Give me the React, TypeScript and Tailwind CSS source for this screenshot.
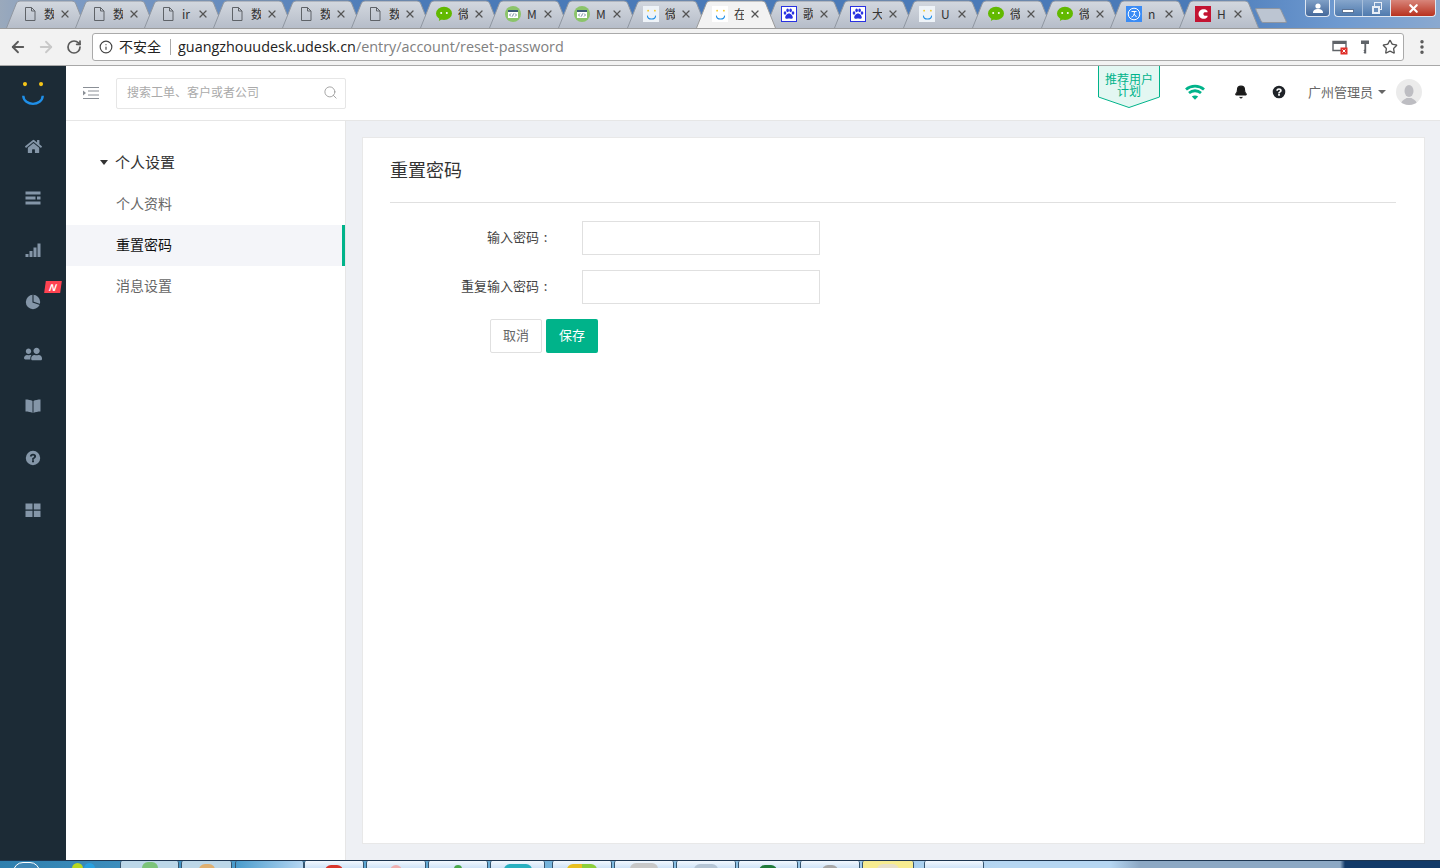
import React from "react";
import {
  ArrowLeft,
  ArrowRight,
  RotateCw,
  Info,
  Star,
  EllipsisVertical,
  Search,
  X,
  Bell,
} from "lucide-react";
import { FaHome, FaUserFriends } from "react-icons/fa";

const cjk = "font-['Noto_Sans_CJK_SC','Liberation_Sans',sans-serif]";

type TabIcon = "doc" | "wechat" | "code" | "udesk" | "paw" | "ji" | "red";

const tabs: { icon: TabIcon; text: string; active?: boolean }[] = [
  { icon: "doc", text: "数" },
  { icon: "doc", text: "数" },
  { icon: "doc", text: "ir" },
  { icon: "doc", text: "数" },
  { icon: "doc", text: "数" },
  { icon: "doc", text: "数" },
  { icon: "wechat", text: "微" },
  { icon: "code", text: "M" },
  { icon: "code", text: "M" },
  { icon: "udesk", text: "微" },
  { icon: "udesk", text: "在", active: true },
  { icon: "paw", text: "歌" },
  { icon: "paw", text: "大" },
  { icon: "udesk", text: "U" },
  { icon: "wechat", text: "微" },
  { icon: "wechat", text: "微" },
  { icon: "ji", text: "n" },
  { icon: "red", text: "H" },
];

function Smile({ size = 16 }: { size?: number }) {
  return (
    <svg width={size} height={size} viewBox="0 0 24 24">
      <circle cx="4.600" cy="3.800" r="1.900" fill="#f5c518" />
      <circle cx="19.400" cy="3.800" r="1.900" fill="#f5c518" />
      <path d="M3 14.500C3.500 24.500 20.500 24.500 21 14.500" fill="none" stroke="#1f8fe8" strokeWidth="2.200" />
    </svg>
  );
}

function Favicon({ icon, active }: { icon: TabIcon; active?: boolean }) {
  if (icon === "doc") {
    return (
      <svg width="16" height="16" viewBox="0 0 16 16" fill="none" stroke="#5f6368" strokeWidth="1">
        <path d="M3.500 1.500h6l3.500 3.500v9.500h-9.500z" />
        <path d="M9.500 1.500v3.500h3.500" />
      </svg>
    );
  }
  if (icon === "wechat") {
    return (
      <svg width="16" height="16" viewBox="0 0 16 16">
        <ellipse cx="8" cy="7.400" rx="8" ry="6.600" fill="#62b900" />
        <path d="M3.500 11.500l-.6 3.600 4-2.600z" fill="#62b900" />
        <circle cx="5.200" cy="7" r="1" fill="#fff" />
        <circle cx="10.800" cy="7" r="1" fill="#fff" />
      </svg>
    );
  }
  if (icon === "code") {
    return (
      <svg width="16" height="16" viewBox="0 0 16 16">
        <circle cx="8" cy="8" r="8" fill="#8bc46a" />
        <rect x="3" y="4" width="10" height="8" fill="#fff" />
        <rect x="3" y="4" width="10" height="2" fill="#3c5a78" />
        <path d="M6 7.500L4.500 9 6 10.500M10 7.500L11.500 9 10 10.500M8.600 7.500L7.400 10.500" fill="none" stroke="#3c5a78" strokeWidth=".7" />
      </svg>
    );
  }
  if (icon === "udesk") {
    return (
      <div className={`flex h-4 w-4 items-center justify-center ${active ? "bg-white" : "bg-[#eef3f8]"}`}>
        <Smile size={11} />
      </div>
    );
  }
  if (icon === "paw") {
    return (
      <svg width="16" height="16" viewBox="0 0 16 16">
        <rect x=".5" y=".5" width="15" height="15" fill="#fff" stroke="#2932e1" />
        <g fill="#2932e1">
          <ellipse cx="4" cy="7" rx="1.300" ry="1.700" />
          <ellipse cx="6.600" cy="4.400" rx="1.300" ry="1.800" />
          <ellipse cx="9.600" cy="4.400" rx="1.300" ry="1.800" />
          <ellipse cx="12" cy="7" rx="1.300" ry="1.700" />
          <path d="M8 7.400c-2 0-3.800 2.400-3.800 4 0 1.600 2 1.400 3.800 1.200 1.800.2 3.800.4 3.800-1.200 0-1.600-1.800-4-3.800-4z" />
        </g>
      </svg>
    );
  }
  if (icon === "ji") {
    return (
      <svg width="16" height="16" viewBox="0 0 16 16">
        <rect width="16" height="16" fill="#3b8cf5" />
        <circle cx="8" cy="8" r="5.800" fill="none" stroke="#fff" strokeWidth="1" />
        <path d="M5.500 5.500h5M8.500 5.500c0 3-1 5-3 5.500M8 8l2.500 3" fill="none" stroke="#fff" strokeWidth="1" />
      </svg>
    );
  }
  return (
    <svg width="16" height="16" viewBox="0 0 16 16">
      <rect width="16" height="16" fill="#c31432" />
      <path d="M12.500 5C11.500 3.600 10 3.200 8.600 3.200 6 3.200 3.500 5 3.500 8s2.500 4.800 5.100 4.800c1.400 0 2.900-.4 3.900-1.800z" fill="#fff" />
      <path d="M13 6.200H9.500A2 2 0 0 0 9.500 9.800H13z" fill="#c31432" />
    </svg>
  );
}

function Tab({ icon, text, active }: { icon: TabIcon; text: string; active?: boolean }) {
  return (
    <div className={`relative -mr-[11px] flex h-[28px] w-[80px] shrink-0 items-center pl-[16px] ${active ? "z-10" : ""}`}>
      <svg className="absolute inset-0" width="80" height="28" viewBox="0 0 80 28">
        <defs>
          <linearGradient id="tabFill" x1="0" y1="0" x2="0" y2="1">
            <stop offset="0" stopColor="#d3d8df" />
            <stop offset="1" stopColor="#b6bdc9" />
          </linearGradient>
        </defs>
        <path
          d="M0.500 28L10.500 3Q11.500 1 14 1H66Q68.500 1 69.500 3L79.500 28"
          fill={active ? "#f2f2f2" : "url(#tabFill)"}
          stroke={active ? "#9a9a9a" : "#8f96a1"}
          strokeWidth="1"
        />
      </svg>
      <div className="relative flex items-center">
        <Favicon icon={icon} active={active} />
        <span className={`${cjk} ml-[6px] h-4 w-[10px] overflow-hidden text-[12px] leading-4 text-[#333]`}>{text}</span>
        <X className="ml-[5px] text-[#555]" size={12} strokeWidth={2.400} />
      </div>
    </div>
  );
}

function BrowserChrome() {
  return (
    <>
      <div className="relative z-0 flex h-[29px] shrink-0 overflow-hidden border-b border-[#9b9b9b] bg-[linear-gradient(90deg,#9aa9bc_0px,#7f9cc4_60px,#4a7ab8_400px,#4a7ab8_1200px,#6f9ad0_1340px,#8aa9d0_1440px)] pl-[6px]">
        {tabs.map((t, i) => (
          <Tab key={i} icon={t.icon} text={t.text} active={t.active} />
        ))}
        <div className="ml-[10px] mt-[8px] h-[15px] w-[26px] skew-x-[25deg] rounded-[2px] border border-[#8f96a1] bg-[#bcc5d2]" />
        <div className="ml-auto flex h-[18px] items-start pr-[4px]">
          <div className="mr-[4px] flex h-[17px] w-[25px] items-center justify-center rounded-b-[4px] border border-t-0 border-[#dfe7f2] bg-[linear-gradient(180deg,#7f9fc6,#44689a)]">
            <svg width="12" height="10" viewBox="0 0 12 10" fill="#fff">
              <circle cx="6" cy="3" r="2.600" />
              <path d="M1 10c0-3 2-4 5-4s5 1 5 4z" />
            </svg>
          </div>
          <div className="flex h-[17px] w-[56px] rounded-bl-[4px] border border-t-0 border-r-0 border-[#dfe7f2] bg-[linear-gradient(180deg,#86a6cc,#4f7aae)]">
            <div className="flex w-[28px] items-center justify-center border-r border-[#a7bfdb]">
              <div className="mt-[5px] h-[4px] w-[12px] border border-[#5c7394] bg-white" />
            </div>
            <div className="relative flex w-[28px] items-center justify-center">
              <div className="absolute left-[11px] top-[2px] h-[8px] w-[8px] border border-[#e8eef6]" />
              <div className="relative mt-[3px] h-[8px] w-[8px] border-2 border-[#e8eef6] bg-[#6a8fbc]" />
            </div>
          </div>
          <div className="flex h-[17px] w-[46px] items-center justify-center rounded-br-[4px] border border-t-0 border-[#dfe7f2] bg-[linear-gradient(180deg,#d8857a,#b8321f)]">
            <X className="text-white" size={13} strokeWidth={4} />
          </div>
        </div>
      </div>

      <div className="flex h-[37px] shrink-0 items-center border-b border-[#a8a8a8] bg-[#f2f2f2]">
        <ArrowLeft className="ml-[9px] text-[#5a5a5a]" size={18} strokeWidth={2.400} />
        <ArrowRight className="ml-[10px] text-[#c8c8c8]" size={18} strokeWidth={2.400} />
        <RotateCw className="ml-[11px] text-[#5a5a5a]" size={16} strokeWidth={2.600} />
        <div className="ml-[10px] flex h-[28px] w-[1312px] items-center rounded-[3px] border border-[#aaaaaa] bg-white pl-[6px]">
          <Info className="text-[#444]" size={14} strokeWidth={2} />
          <span className={`${cjk} ml-[6px] pb-[2px] text-[14px] text-[#222]`}>不安全</span>
          <div className="ml-[9px] h-[16px] w-px bg-[#aaa]" />
          <span className="ml-[7px] font-['Open_Sans',sans-serif] text-[14.400px] text-[#222]">
            guangzhouudesk.udesk.cn
            <span className="text-[#808080]">/entry/account/reset-password</span>
          </span>
          <div className="ml-auto flex items-center gap-[9px] pr-[5px]">
            <svg width="16" height="16" viewBox="0 0 16 16">
              <path d="M1 2.500h13v9H1z" fill="none" stroke="#5f6368" strokeWidth="1.400" />
              <rect x="1" y="2" width="13" height="3" fill="#5f6368" />
              <rect x="8.500" y="8.500" width="7" height="7" fill="#e0302a" />
              <path d="M10.500 10.500l3 3m0-3l-3 3" stroke="#fff" />
            </svg>
            <svg width="16" height="16" viewBox="0 0 16 16" fill="#5f6368">
              <path d="M4 1.500h8v3.500H9.200v9.500H7.400l-.9-1 .9-1-.9-1 .9-1V5H4z" />
            </svg>
            <Star className="text-[#555]" size={16} strokeWidth={2} />
          </div>
        </div>
        <EllipsisVertical className="ml-[9px] text-[#555]" size={18} strokeWidth={2.600} />
      </div>
    </>
  );
}

const navIcons: React.ReactNode[] = [
  <FaHome key="home" size={17} />,
  <svg key="list" width="16" height="16" viewBox="0 0 16 16">
    <path d="M.5 1.500h15v3H.5zM.5 6.500h10v3H.5zM12 6.500h3.500v3H12zM.5 11.500h15v3H.5z" />
  </svg>,
  <svg key="bars" width="16" height="16" viewBox="0 0 16 16">
    <path d="M.5 12h3v3h-3zM4.500 9h3v6h-3zM8.500 5.500h3V15h-3zM12.500 1.500h3V15h-3z" />
  </svg>,
  <svg key="pie" width="16" height="16" viewBox="0 0 16 16">
    <circle cx="8" cy="8" r="7.200" />
    <path d="M8 .5V8l7 2.500" fill="none" stroke="#1c2b36" strokeWidth="1.100" />
  </svg>,
  <FaUserFriends key="users" size={18} className="-scale-x-100" />,
  <svg key="book" width="16" height="16" viewBox="0 0 16 16">
    <path d="M.5 1.500C3 1.500 6 2 7.500 3v12C6 14 3 13.500.5 13.500zM15.500 1.500C13 1.500 10 2 8.500 3v12c1.500-1 4.500-1.500 7-1.500z" />
  </svg>,
  <svg key="help" width="16" height="16" viewBox="0 0 16 16">
    <path
      fillRule="evenodd"
      d="M8 .8a7.200 7.200 0 1 1 0 14.400A7.200 7.200 0 0 1 8 .8zM7 10.300v1.900h2v-1.900zM8 3.800c-1.700 0-3 .9-3.100 2.700h1.900c.1-.7.5-1 1.200-1 .6 0 1.100.3 1.100.9 0 .5-.3.800-.9 1.200-.9.500-1.200 1.100-1.200 2.100h1.900c0-.5.200-.8.800-1.200.8-.5 1.400-1.100 1.400-2.200 0-1.600-1.300-2.500-3.100-2.500z"
    />
  </svg>,
  <svg key="grid" width="16" height="16" viewBox="0 0 16 16">
    <path d="M.5 1.500h7v6h-7zM8.800 1.500h6.700v6H8.800zM.5 8.800h7V15h-7zM8.800 8.800h6.700V15H8.800z" />
  </svg>,
];

function MainSidebar() {
  return (
    <aside className="flex w-[66px] shrink-0 flex-col items-center bg-[#1c2b36]">
      <div className="flex h-[54px] w-full items-center justify-center">
        <Smile size={26} />
      </div>
      {navIcons.map((icon, i) => (
        <div key={i} className="relative flex h-[52px] w-full items-center justify-center fill-[#8496a8] text-[#8496a8]">
          {icon}
          {i === 3 && (
            <span className="absolute right-[5px] top-[5px] flex h-[12px] w-[16px] skew-x-[-8deg] items-center justify-center bg-[#ff4351] font-['Liberation_Sans',sans-serif] text-[10px] font-bold italic text-white">
              N
            </span>
          )}
        </div>
      ))}
    </aside>
  );
}

function TopBar() {
  return (
    <header className="flex h-[55px] shrink-0 items-center border-b border-[#e6e6e6] bg-white pl-[16px] pr-[18px]">
      <svg width="18" height="14" viewBox="0 0 18 14" stroke="#8a8f96" strokeWidth="1">
        <path d="M1 1.500h16M6 5h11M6 9h11M1 12.500h16" />
        <path d="M1 4.500v5l3-2.500z" fill="#8a8f96" stroke="none" />
      </svg>
      <div className="ml-[16px] flex h-[31px] w-[230px] items-center justify-between rounded-[2px] border border-[#e6e6e6] pb-[2px] pl-[10px] pr-[7px]">
        <span className={`${cjk} text-[12px] text-[#aaaaaa]`}>搜索工单、客户或者公司</span>
        <Search className="text-[#999]" size={15} strokeWidth={1.400} />
      </div>
      <div className="ml-auto flex h-full items-start">
        <div className="relative mr-[25px] flex h-[42px] w-[62px] justify-center">
          <svg className="absolute inset-0" width="62" height="42" viewBox="0 0 62 42">
            <path d="M.5 0V31L31 41.500 61.500 31V0" fill="#e3f7f2" stroke="#00b38a" />
          </svg>
          <span className={`${cjk} relative mt-[7px] w-[50px] text-center text-[12px] leading-[12px] text-[#00b38a]`}>
            推荐用户计划
          </span>
        </div>
        <div className="flex h-full items-center pb-[2px]">
          <svg width="20" height="16" viewBox="0 0 20 16" fill="none" stroke="#00b38a" strokeWidth="2.800">
            <path d="M1 5.500c5-4.500 13-4.500 18 0M4 9c3.500-3 8.500-3 12 0" />
            <path d="M6.800 12.500L10 15.800l3.200-3.300c-1.800-1.400-4.600-1.400-6.400 0z" fill="#00b38a" stroke="none" />
          </svg>
          <Bell className="ml-[29px] text-[#1a1a1a]" size={14} fill="#1a1a1a" />
          <svg className="ml-[24px] fill-[#1f2328]" width="14" height="14" viewBox="0 0 16 16">
            <path
              fillRule="evenodd"
              d="M8 .8a7.200 7.200 0 1 1 0 14.400A7.200 7.200 0 0 1 8 .8zM7 10.300v1.900h2v-1.900zM8 3.800c-1.700 0-3 .9-3.100 2.700h1.900c.1-.7.500-1 1.200-1 .6 0 1.100.3 1.100.9 0 .5-.3.800-.9 1.200-.9.500-1.200 1.100-1.200 2.100h1.900c0-.5.200-.8.800-1.200.8-.5 1.400-1.100 1.400-2.200 0-1.600-1.300-2.500-3.100-2.500z"
            />
          </svg>
          <span className={`${cjk} ml-[22px] text-[13px] text-[#666]`}>广州管理员</span>
          <div className="ml-[5px] h-0 w-0 border-x-[4px] border-t-[4px] border-x-transparent border-t-[#666]" />
          <div className="ml-[10px] flex h-[26px] w-[26px] items-end justify-center overflow-hidden rounded-full bg-[#ebebeb]">
            <svg width="16" height="21" viewBox="0 0 16 21" fill="#bdbdc2">
              <ellipse cx="8" cy="7" rx="4.500" ry="6" />
              <path d="M0 21c0-5 4-5.500 5.500-7h5c1.500 1.500 5.500 2 5.500 7z" />
            </svg>
          </div>
        </div>
      </div>
    </header>
  );
}

function SubMenu() {
  return (
    <nav className={`${cjk} w-[280px] shrink-0 border-r border-[#e6e6e6] bg-white pt-[21px]`}>
      <div className="flex h-[42px] items-center pb-[1px] pl-[34px] text-[15px] text-[#333]">
        <div className="mr-[7px] h-0 w-0 border-x-[4px] border-t-[5px] border-x-transparent border-t-[#333]" />
        个人设置
      </div>
      <div className="flex h-[41px] items-center pb-[2px] pl-[50px] text-[14px] text-[#666]">个人资料</div>
      <div className="flex h-[41px] items-center border-r-[3px] border-[#00b38a] bg-[#f4f5f9] pb-[2px] pl-[50px] text-[14px] text-[#111]">
        重置密码
      </div>
      <div className="flex h-[41px] items-center pb-[2px] pl-[50px] text-[14px] text-[#666]">消息设置</div>
    </nav>
  );
}

function FormRow({ label }: { label: string }) {
  return (
    <div className="flex items-center">
      <label className="flex w-[162px] justify-end pb-[3px] text-[13px] text-[#444]">
        {label}
        <span className="w-[13px] text-center">:</span>
      </label>
      <input type="password" className="ml-[30px] h-[34px] w-[238px] border border-[#e0e0e0] bg-white outline-none" />
    </div>
  );
}

function ResetPassword() {
  return (
    <section className={`${cjk} flex-1 border border-[#e8e8e8] bg-white pl-[27px] pr-[28px]`}>
      <h1 className="flex h-[65px] items-center border-b border-[#e0e0e0] pb-[2px] text-[18px] font-normal text-[#333]">
        重置密码
      </h1>
      <form className="flex flex-col gap-[15px] pt-[18px]">
        <FormRow label="输入密码" />
        <FormRow label="重复输入密码" />
        <div className="ml-[100px] flex gap-[4px]">
          <button type="button" className="h-[34px] w-[52px] rounded-[2px] border border-[#e0e0e0] bg-white pb-[2px] text-[13px] text-[#666]">
            取消
          </button>
          <button type="button" className="h-[34px] w-[52px] rounded-[2px] bg-[#00b38a] pb-[2px] text-[13px] text-white">
            保存
          </button>
        </div>
      </form>
    </section>
  );
}

function Taskbar() {
  const light = "bg-[linear-gradient(180deg,#f2f8fe,#cfe3f7)]";
  const items = [
    { w: "w-[59px] ml-[25px]", tip: "bg-[#7cc47a] mt-[1px] w-[16px]", bg: "bg-[#bcd7e8]" },
    { w: "w-[51px] ml-[2px]", tip: "bg-[#e0b070] mt-[3px] w-[16px]", bg: "bg-[#bcd7e8]" },
    { w: "w-[69px] ml-[3px]", tip: "bg-transparent mt-[3px] w-[16px]", bg: "bg-[linear-gradient(90deg,#4a9ccc,#b5d6f2)]" },
    { w: "w-[60px]", tip: "bg-[#d8352a] mt-[4px] w-[18px]", bg: light },
    { w: "w-[60px] ml-[2px]", tip: "bg-[#f0b0b0] mt-[4px] w-[12px]", bg: light },
    { w: "w-[60px] ml-[2px]", tip: "bg-[#49a84c] mt-[4px] w-[8px]", bg: light },
    { w: "w-[55px] ml-[2px]", tip: "bg-[#28b0c0] mt-[3px] w-[28px]", bg: light },
    { w: "w-[60px] ml-[7px]", tip: "bg-[linear-gradient(90deg,#e8c020_50%,#8ccf3c_50%)] mt-[3px] w-[30px]", bg: light },
    { w: "w-[60px] ml-[2px]", tip: "bg-[#c8c8c8] mt-[2px] w-[28px]", bg: light },
    { w: "w-[60px] ml-[2px]", tip: "bg-[#b5c5d5] mt-[3px] w-[24px]", bg: light },
    { w: "w-[60px] ml-[2px]", tip: "bg-[#1f7a3a] mt-[4px] w-[18px]", bg: light },
    { w: "w-[60px] ml-[2px]", tip: "bg-[#a8a8a8] mt-[4px] w-[16px]", bg: light },
    { w: "w-[52px] ml-[2px]", tip: "bg-[#e8e0c8] mt-[3px] w-[22px]", bg: "bg-[#f7ec90]" },
    { w: "w-[60px] ml-[10px]", tip: "bg-transparent mt-[3px] w-[20px]", bg: light },
  ];
  return (
    <footer className="flex h-[8px] shrink-0 overflow-hidden border-t border-[#1d3550] bg-[linear-gradient(90deg,#2f7fae_0px,#4a9ccc_240px,#b5d6f2_1000px,#b5d6f2_1110px,#8ca8c4_1140px,#8ca8c4_1340px,#123a68_1345px,#123a68_1440px)]">
      <div className="ml-[13px] mt-px h-[20px] w-[27px] shrink-0 rounded-full border border-white bg-[#3f86b5]" />
      <div className="ml-[32px] mt-[2px] h-[6px] w-[11px] shrink-0 rounded-t-full bg-[#b8d820]" />
      <div className="ml-[1px] mt-[2px] h-[6px] w-[11px] shrink-0 rounded-t-full bg-[#28a0e0]" />
      {items.map((it, i) => (
        <div key={i} className={`${it.w} ${it.bg} flex shrink-0 justify-center rounded-t-[2px] border-x border-[#36556f]`}>
          <div className={`${it.tip} h-[6px] rounded-t-full`} />
        </div>
      ))}
    </footer>
  );
}

export default function App() {
  return (
    <div className="flex h-[868px] w-[1440px] flex-col overflow-hidden bg-white">
      <BrowserChrome />
      <div className="flex min-h-0 flex-1">
        <MainSidebar />
        <div className="flex min-w-0 flex-1 flex-col">
          <TopBar />
          <div className="flex min-h-0 flex-1">
            <SubMenu />
            <main className="flex flex-1 bg-[#eef0f4] pb-[16px] pl-[16px] pr-[15px] pt-[16px]">
              <ResetPassword />
            </main>
          </div>
        </div>
      </div>
      <Taskbar />
    </div>
  );
}
